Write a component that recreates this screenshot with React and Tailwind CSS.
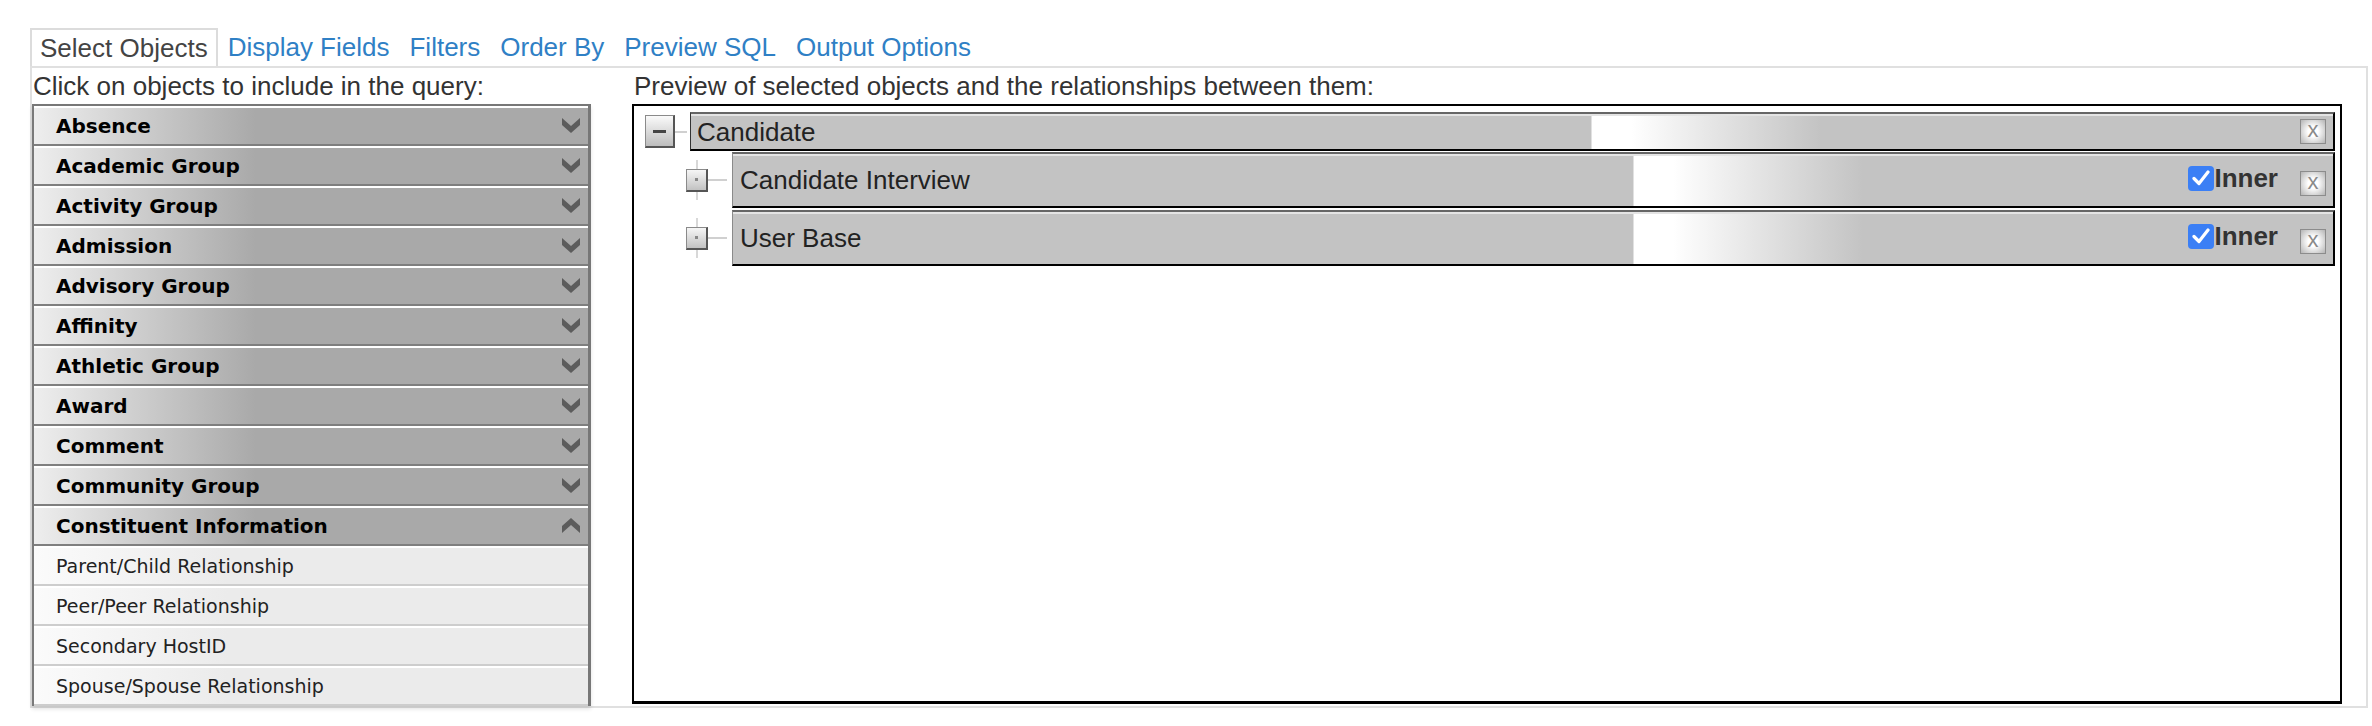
import React from "react";

const groups = [
  "Absence",
  "Academic Group",
  "Activity Group",
  "Admission",
  "Advisory Group",
  "Affinity",
  "Athletic Group",
  "Award",
  "Comment",
  "Community Group",
];

const children = [
  "Parent/Child Relationship",
  "Peer/Peer Relationship",
  "Secondary HostID",
  "Spouse/Spouse Relationship",
];

function Chevron({ up }) {
  return (
    <svg width="18" height="16" viewBox="0 0 18 16" className="shrink-0">
      {up ? (
        <polygon points="0,15 9,7 18,15 18,8 9,0 0,8" fill="#5c5c5c" />
      ) : (
        <polygon points="0,0 9,8 18,0 18,7 9,15 0,7" fill="#5c5c5c" />
      )}
    </svg>
  );
}

function HeaderRow({ label, up }) {
  return (
    <div className="h-[40px] flex items-center justify-between pl-[22px] pr-[8px] border-t-2 border-t-white border-b-2 border-b-[#7f7f7f] bg-[linear-gradient(to_right,#eeeeee_0%,#a9a9a9_40%,#a9a9a9_100%)]">
      <span className="font-['DejaVu_Sans',sans-serif] font-bold text-[20px] text-black leading-none">
        {label}
      </span>
      <Chevron up={up} />
    </div>
  );
}

function ChildRow({ label }) {
  return (
    <div className="h-[40px] flex items-center pl-[22px] border-t-2 border-t-white border-b-2 border-b-[#cdcdcd] bg-[linear-gradient(to_right,#fbfbfb_0%,#ebebeb_35%,#ebebeb_100%)]">
      <span className="font-['DejaVu_Sans',sans-serif] text-[19px] text-[#222] leading-none">
        {label}
      </span>
    </div>
  );
}

function CloseBox() {
  return (
    <div className="w-[26px] h-[25px] flex items-center justify-center border border-[#8c8c8c] bg-[radial-gradient(circle,#ffffff_30%,#b4b4b4_100%)] shrink-0">
      <span className="text-[22px] leading-none text-[#8a8a8a] -mt-[3px]">x</span>
    </div>
  );
}

function InnerCheck() {
  return (
    <div className="flex items-center mb-[4px]">
      <div className="w-[26px] h-[25px] rounded-[4px] bg-[#3b7ff5] flex items-center justify-center">
        <svg width="18" height="16" viewBox="0 0 18 16">
          <path d="M2 8.5 L7 13.5 L16 2" stroke="#fff" strokeWidth="3.2" fill="none" strokeLinecap="round" strokeLinejoin="round" />
        </svg>
      </div>
      <span className="text-[26px] font-bold text-[#333] leading-none">Inner</span>
    </div>
  );
}

function Bar({ label, child }) {
  return (
    <div
      className={
        "flex-1 h-full flex items-center border-t-2 border-t-[#666] border-b-2 border-b-black border-r-2 border-r-black shadow-[inset_0_2px_0_#e4e4e4] bg-[linear-gradient(to_right,#c3c3c3_0px,#c3c3c3_900px,#ffffff_901px,#ffffff_940px,#c3c3c3_1130px,#c3c3c3_100%)] " +
        (child ? "border-l border-l-[#8a8a8a] pl-[7px]" : "border-l border-l-[#333] pl-[6px]")
      }
    >
      <span className="text-[26px] text-[#222] leading-none">{label}</span>
      <div className="ml-auto flex items-center pr-[7px]">
        {child && <InnerCheck />}
        <div className={child ? "ml-[22px] mt-[6px]" : ""}>
          <CloseBox />
        </div>
      </div>
    </div>
  );
}

function TreeButton({ minus }) {
  if (minus) {
    return (
      <div className="w-[30px] h-[33px] shrink-0 border border-[#8a8a8a] border-r-2 border-b-2 border-r-[#555] border-b-[#555] bg-[linear-gradient(to_bottom,#fafafa,#bdbdbd)] flex items-center justify-center">
        <div className="w-[13px] h-[3px] bg-[#444]" />
      </div>
    );
  }
  return (
    <div className="w-[22px] h-[23px] shrink-0 border border-[#8a8a8a] border-r-2 border-b-2 border-r-[#555] border-b-[#555] bg-[linear-gradient(to_bottom,#f6f6f6,#c2c2c2)] flex items-center justify-center">
      <div className="w-[3px] h-[3px] bg-[#888]" />
    </div>
  );
}

function ChildTreeRow({ label }) {
  return (
    <div className="flex h-[56px]">
      <div className="w-[41px] shrink-0" />
      <div className="w-[22px] shrink-0 flex flex-col items-center py-[8px]">
        <div className="flex-1 w-[2px] bg-[#d8d8d8]" />
        <TreeButton />
        <div className="flex-1 w-[2px] bg-[#d8d8d8]" />
      </div>
      <div className="self-center w-[19px] h-[2px] bg-[#d0d0d0] shrink-0" />
      <div className="w-[5px] shrink-0" />
      <Bar label={label} child />
    </div>
  );
}

export default function App() {
  const tabs = ["Display Fields", "Filters", "Order By", "Preview SQL", "Output Options"];
  return (
    <div className="min-h-[726px] bg-white pt-[28px] pl-[30px] pr-[4px] font-['Liberation_Sans',Arial,sans-serif]">
      <div className="flex items-end h-[38px]">
        <div className="h-[38px] border-2 border-b-0 border-[#dcdcdc] px-[8px] flex items-center text-[26px] text-[#444] leading-none">
          Select Objects
        </div>
        {tabs.map((t) => (
          <div key={t} className="h-[38px] px-[10px] flex items-center text-[26px] text-[#2f80c5] leading-none">
            {t}
          </div>
        ))}
      </div>
      <div className="border-2 border-[#e0e0e0] h-[642px] flex">
        <div className="w-[559px] shrink-0 flex flex-col">
          <div className="h-[36px] flex items-center pl-[1px] text-[26px] text-[#333] leading-none">
            Click on objects to include in the query:
          </div>
          <div className="border-t-2 border-t-[#777] border-l-2 border-l-[#7a7a7a] border-r-[3px] border-r-[#777] shadow-[0_3px_4px_rgba(0,0,0,0.12)]">
            {groups.map((g) => (
              <HeaderRow key={g} label={g} />
            ))}
            <HeaderRow label="Constituent Information" up />
            {children.map((c) => (
              <ChildRow key={c} label={c} />
            ))}
          </div>
        </div>
        <div className="ml-[41px] w-[1710px] shrink-0 flex flex-col">
          <div className="h-[36px] flex items-center pl-[2px] text-[26px] text-[#333] leading-none">
            Preview of selected objects and the relationships between them:
          </div>
          <div className="h-[600px] border-2 border-black border-b-[3px] pt-[6px] pl-[11px] pr-[5px]">
            <div className="flex items-center h-[39px]">
              <TreeButton minus />
              <div className="w-[12px] h-[2px] bg-[#d0d0d0] shrink-0" />
              <div className="w-[3px] shrink-0" />
              <Bar label="Candidate" />
            </div>
            <div className="mt-[1px] flex flex-col gap-[2px]">
              <ChildTreeRow label="Candidate Interview" />
              <ChildTreeRow label="User Base" />
            </div>
          </div>
        </div>
      </div>
    </div>
  );
}
